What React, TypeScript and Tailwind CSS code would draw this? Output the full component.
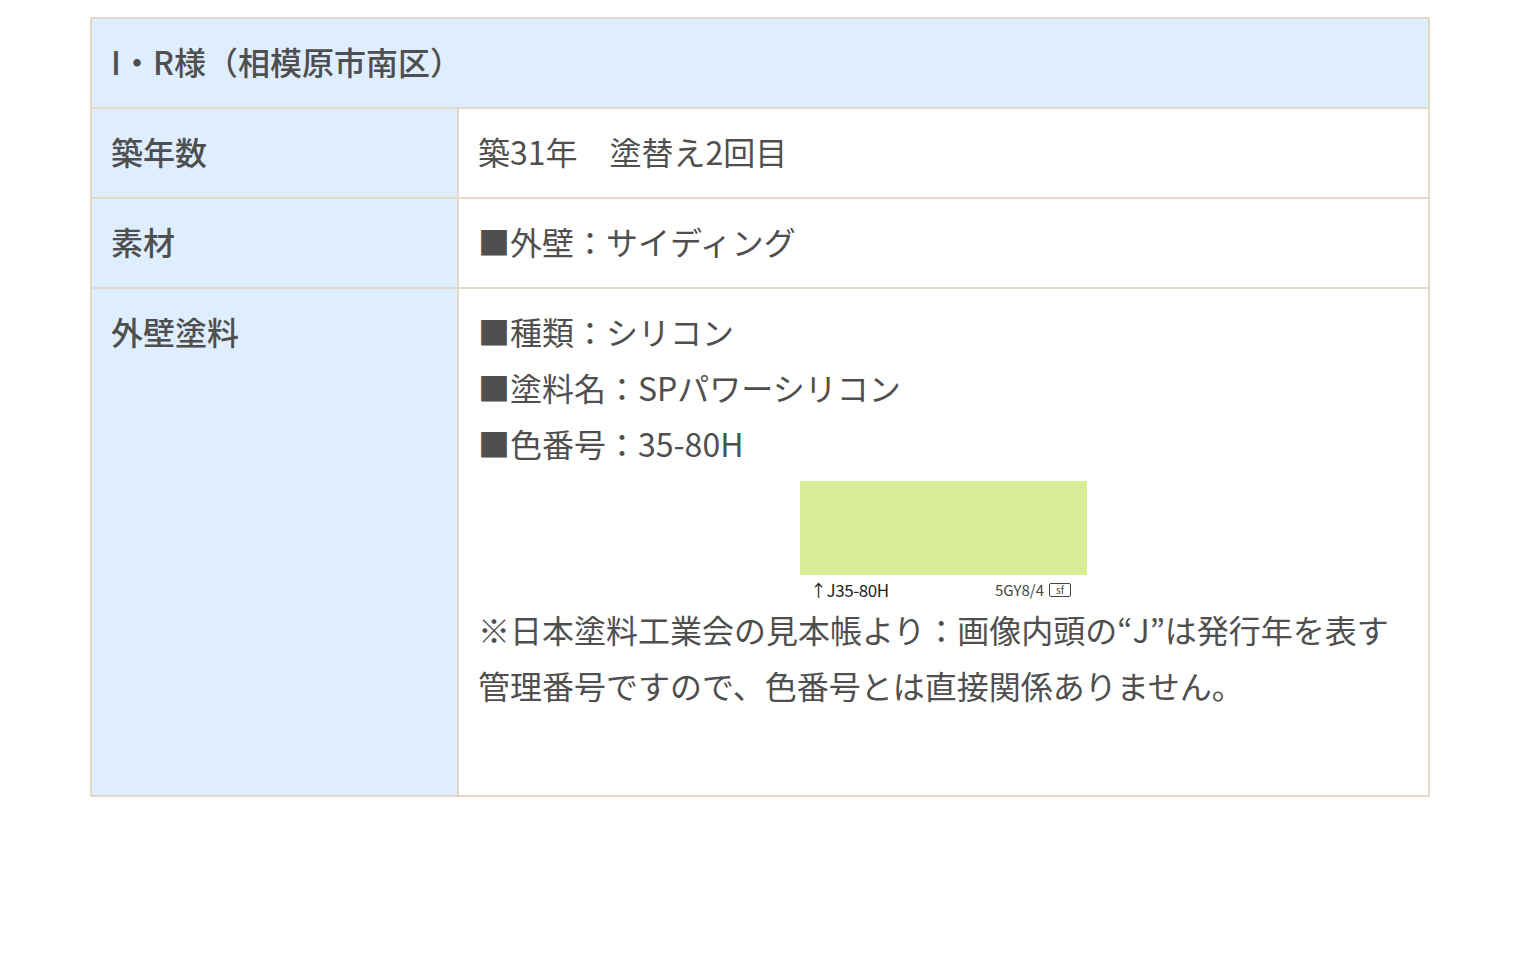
const font = '"Noto Sans CJK JP", "Noto Sans", sans-serif';

function Swatch() {
  return (
    <div className="mx-auto w-[287px] h-[130px] pt-[10px] bg-white">
      <div className="h-[94px] bg-[#dbec96]" />
      <div className="flex items-center justify-between pl-[10px] pr-[16px] pt-[5px] leading-5 text-[#222]">
        <span className="text-[17px] tracking-tight">↑J35-80H</span>
        <span className="flex items-center gap-[5px] text-[15px] text-[#444]">
          5GY8/4
          <span className="border border-[#444] rounded-[2px] px-[6px] text-[10px] leading-[12px]">sf</span>
        </span>
      </div>
    </div>
  );
}

export default function App() {
  const cell = 'border-2 border-[#e2d9ca] px-[19px] pt-[14px] pb-[18px] align-top';
  const head = `${cell} bg-[#deeeff] text-left font-medium`;
  return (
    <div className="min-h-[979px] bg-white pt-[17px]" style={{ fontFamily: font }}>
      <table className="mx-auto w-[1340px] border-collapse text-[32px] leading-[56px] text-[#4f4f4f]">
        <tbody>
          <tr>
            <th colSpan={2} className={head}>
              I・R様（相模原市南区）
            </th>
          </tr>
          <tr>
            <th className={`${head} w-[367px]`}>築年数</th>
            <td className={cell}>築31年　塗替え2回目</td>
          </tr>
          <tr>
            <th className={head}>素材</th>
            <td className={cell}>■外壁：サイディング</td>
          </tr>
          <tr>
            <th className={head}>外壁塗料</th>
            <td className={`${cell} pb-[82px]`}>
              <div>■種類：シリコン</div>
              <div>■塗料名：SPパワーシリコン</div>
              <div>■色番号：35-80H</div>
              <Swatch />
              <div>
                ※日本塗料工業会の見本帳より：画像内頭の“J”は発行年を表す
                <br />
                管理番号ですので、色番号とは直接関係ありません。
              </div>
            </td>
          </tr>
        </tbody>
      </table>
    </div>
  );
}
